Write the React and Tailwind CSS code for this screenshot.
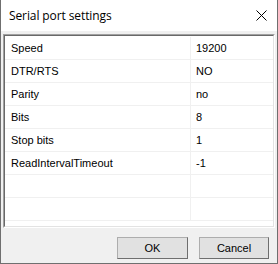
import React from "react";

const ROWS = [
  ["Speed", "19200"],
  ["DTR/RTS", "NO"],
  ["Parity", "no"],
  ["Bits", "8"],
  ["Stop bits", "1"],
  ["ReadIntervalTimeout", "-1"],
  ["", ""],
  ["", ""],
];

const App = () => {
  return (
    <div className="w-[278px] h-[264px] flex flex-col bg-[#f0f0f0] border-x border-b border-[#6f6f6f] overflow-hidden font-['Liberation_Sans',Arial,sans-serif]">
      {/* title bar */}
      <div className="h-[31px] shrink-0 bg-white flex items-center justify-between pl-[8px] pr-[9px]">
        <span className="text-[12px] text-black font-['Open_Sans',sans-serif] leading-none tracking-[-0.1px]">
          Serial port settings
        </span>
        <svg width="11" height="11" viewBox="0 0 11 11" className="mr-[1px]">
          <path d="M0.5 0.5 L10.5 10.5 M10.5 0.5 L0.5 10.5" stroke="#000" strokeWidth="1" />
        </svg>
      </div>

      {/* list */}
      <div className="mt-[3px] mx-[2px] h-[194px] border border-[#a0a0a0] border-r-white border-b-white">
        <div className="h-full border border-[#696969] border-r-[#e3e3e3] border-b-[#e3e3e3] bg-white overflow-hidden pt-[1px]">
          {ROWS.map(([name, value], i) => (
            <div key={i} className="flex h-[23px] border-b border-[#f0f0f0] text-[11px] text-black">
              <div className="w-[186px] pl-[6px] flex items-center border-r border-[#f0f0f0]">{name}</div>
              <div className="flex-1 pl-[5px] flex items-center">{value}</div>
            </div>
          ))}
        </div>
      </div>

      {/* buttons */}
      <div className="flex justify-end gap-[11px] pr-[8px] mt-[9px]">
        <button className="w-[71px] h-[22px] bg-[#e1e1e1] border border-[#adadad] border-b-[#6e6e6e] border-r-[#6e6e6e] text-[11px] text-black">
          OK
        </button>
        <button className="w-[70px] h-[22px] bg-[#e1e1e1] border border-[#adadad] border-b-[#6e6e6e] border-r-[#6e6e6e] text-[11px] text-black">
          Cancel
        </button>
      </div>
    </div>
  );
};

export default App;
